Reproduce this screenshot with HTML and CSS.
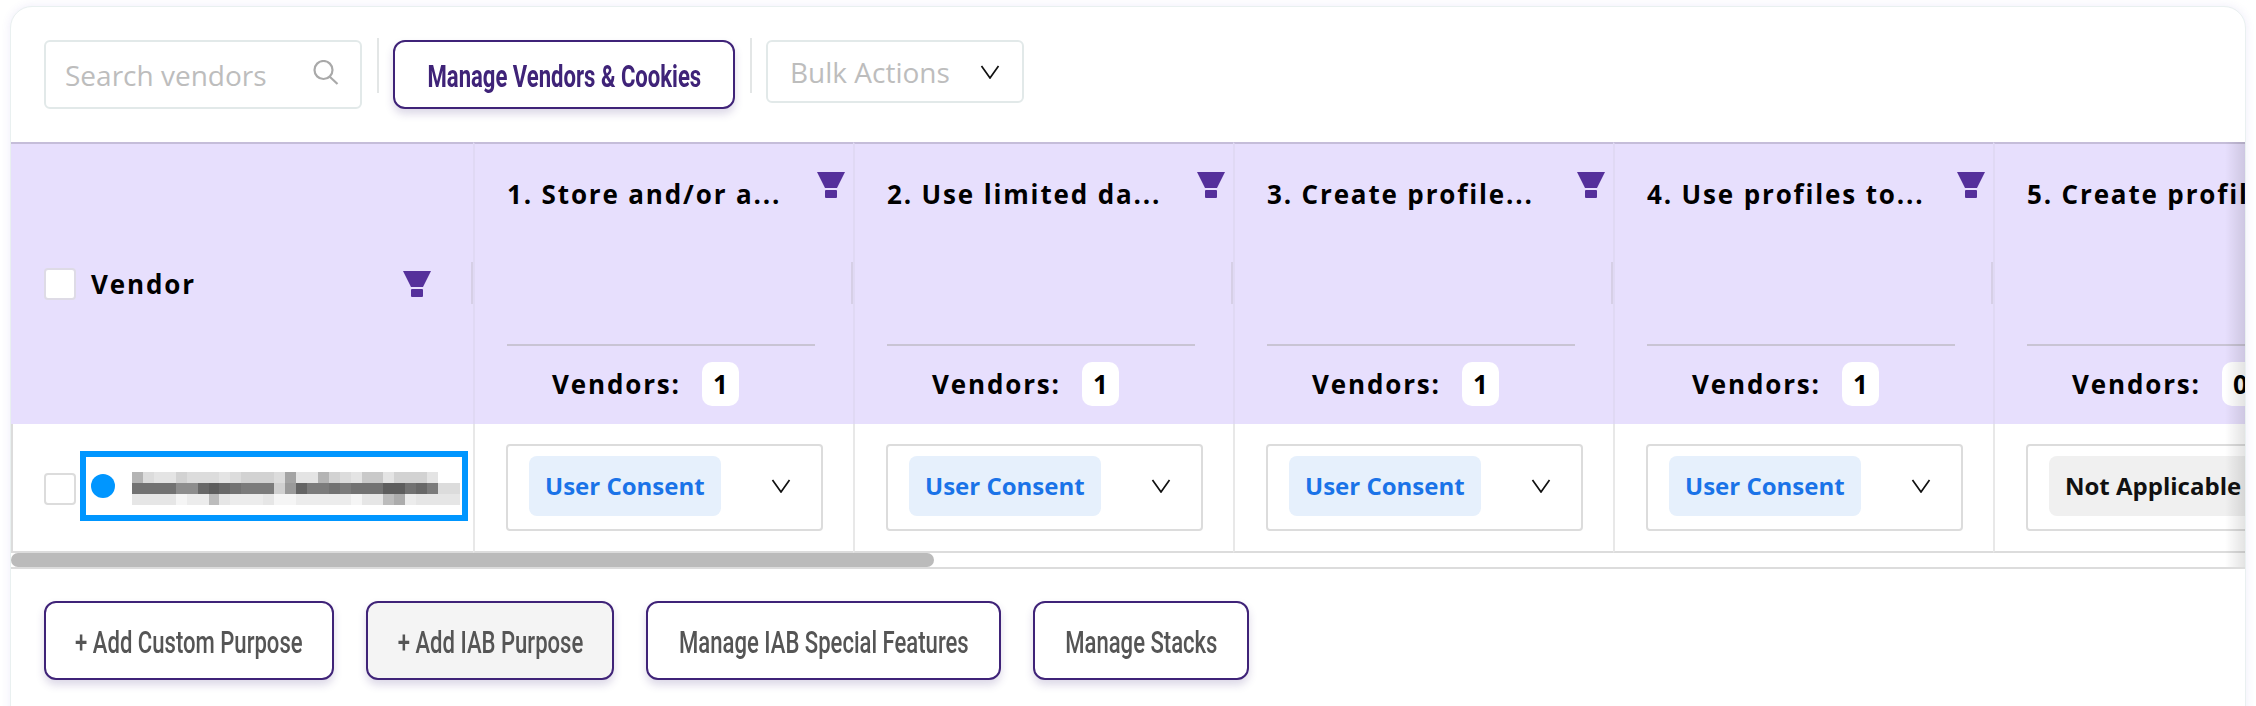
FILE: index.html
```html
<!DOCTYPE html>
<html lang="en">

<head>
  <meta charset="UTF-8" />
  <title>Vendors</title>
  <link rel="stylesheet" href="styles.css">
</head>

<body>
  <div class="card">
    <div class="toolbar">
      <div class="search-box">
        <span>Search vendors</span>
        <svg class="search-icon" width="26" height="26" viewBox="0 0 26 26" fill="none" stroke="#a9a9a9" stroke-width="2.2"><circle cx="10.5" cy="10" r="9"/><path d="M16.5 16.5 L24.5 24"/></svg>
      </div>
      <div class="divider"></div>
      <button class="btn btn-main"><span class="narrow">Manage Vendors &amp; Cookies</span></button>
      <div class="divider"></div>
      <div class="bulk-box">
        <span>Bulk Actions</span>
        <svg class="chevron" width="20" height="14" viewBox="0 0 20 14" fill="none" stroke="#111" stroke-width="1.7"><path d="M1.5 1 L10 13 L18.5 1"/></svg>
      </div>
    </div>

    <div class="table-wrap">
      <div class="table">
        <div class="th th-vendor">
          <span class="checkbox"></span>
          <span class="vendor-label">Vendor</span>
          <svg class="funnel funnel-vendor" width="28" height="26" viewBox="0 0 28 26"><path d="M0 0 H28 L20 16 H8 Z"/><rect x="8" y="18" width="12" height="8" rx="1"/></svg>
        </div>
        <div class="th">
          <div class="th-top">
            <span class="th-title">1. Store and/or a...</span>
            <svg class="funnel" width="28" height="26" viewBox="0 0 28 26"><path d="M0 0 H28 L20 16 H8 Z"/><rect x="8" y="18" width="12" height="8" rx="1"/></svg>
          </div>
          <div class="th-foot"><span>Vendors:</span><span class="count">1</span></div>
        </div>
        <div class="th">
          <div class="th-top">
            <span class="th-title">2. Use limited da...</span>
            <svg class="funnel" width="28" height="26" viewBox="0 0 28 26"><path d="M0 0 H28 L20 16 H8 Z"/><rect x="8" y="18" width="12" height="8" rx="1"/></svg>
          </div>
          <div class="th-foot"><span>Vendors:</span><span class="count">1</span></div>
        </div>
        <div class="th">
          <div class="th-top">
            <span class="th-title">3. Create profile...</span>
            <svg class="funnel" width="28" height="26" viewBox="0 0 28 26"><path d="M0 0 H28 L20 16 H8 Z"/><rect x="8" y="18" width="12" height="8" rx="1"/></svg>
          </div>
          <div class="th-foot"><span>Vendors:</span><span class="count">1</span></div>
        </div>
        <div class="th">
          <div class="th-top">
            <span class="th-title">4. Use profiles to...</span>
            <svg class="funnel" width="28" height="26" viewBox="0 0 28 26"><path d="M0 0 H28 L20 16 H8 Z"/><rect x="8" y="18" width="12" height="8" rx="1"/></svg>
          </div>
          <div class="th-foot"><span>Vendors:</span><span class="count">1</span></div>
        </div>
        <div class="th th-last">
          <div class="th-top">
            <span class="th-title">5. Create profiles...</span>
          </div>
          <div class="th-foot"><span>Vendors:</span><span class="count">0</span></div>
        </div>

        <div class="td td-vendor">
          <span class="checkbox checkbox-row"></span>
          <div class="vendor-focus">
            <span class="dot"></span>
            <!-- vendor name is pixelated in the source -->
            <svg class="pixels" width="328" height="33" viewBox="0 0 30 3" preserveAspectRatio="none" shape-rendering="crispEdges">
              <g>
                <path fill="#b4b4b4" d="M0 0h1v1h-1z M17 0h1v1h-1z"/>
                <path fill="#a4a4a4" d="M14 0h1v1h-1z"/>
                <path fill="#dcdcdc" d="M1 0h1v1h-1z M5 0h3v1h-3z M9 0h1v1h-1z M13 0h1v1h-1z M19 0h1v1h-1z"/>
                <path fill="#e4e4e4" d="M2 0h2v1h-2z M8 0h1v1h-1z M15 0h2v1h-2z M20 0h1v1h-1z M23 0h1v1h-1z M27 0h1v1h-1z"/>
                <path fill="#d2d2d2" d="M4 0h1v1h-1z M10 0h3v1h-3z M18 0h1v1h-1z M24 0h3v1h-3z"/>
                <path fill="#c9c9c9" d="M21 0h2v1h-2z"/>
                <path fill="#727272" d="M0 1h4v1h-4z M9 1h1v1h-1z M18 1h1v1h-1z M20 1h3v1h-3z M25 1h1v1h-1z"/>
                <path fill="#8d8d8d" d="M4 1h2v1h-2z"/>
                <path fill="#686868" d="M6 1h1v1h-1z M8 1h1v1h-1z M26 1h1v1h-1z"/>
                <path fill="#5d5d5d" d="M7 1h1v1h-1z M23 1h2v1h-2z"/>
                <path fill="#7b7b7b" d="M10 1h3v1h-3z M16 1h2v1h-2z M19 1h1v1h-1z M27 1h1v1h-1z"/>
                <path fill="#d0d0d0" d="M13 1h1v1h-1z"/>
                <path fill="#9a9a9a" d="M14 1h1v1h-1z"/>
                <path fill="#646464" d="M15 1h1v1h-1z"/>
                <path fill="#dcdcdc" d="M28 1h2v1h-2z"/>
                <path fill="#e6e6e6" d="M0 2h4v1h-4z M8 2h1v1h-1z M12 2h1v1h-1z M21 2h2v1h-2z M26 2h4v1h-4z"/>
                <path fill="#f5f5f5" d="M4 2h1v1h-1z M13 2h2v1h-2z M20 2h1v1h-1z"/>
                <path fill="#ececec" d="M5 2h2v1h-2z M9 2h3v1h-3z M15 2h5v1h-5z M25 2h1v1h-1z"/>
                <path fill="#bcbcbc" d="M7 2h1v1h-1z M23 2h1v1h-1z"/>
                <path fill="#acacac" d="M24 2h1v1h-1z"/>
              </g>
            </svg>
          </div>
        </div>
        <div class="td">
          <div class="select"><span class="chip chip-blue">User Consent</span><svg class="chevron" width="20" height="14" viewBox="0 0 20 14" fill="none" stroke="#111" stroke-width="1.7"><path d="M1.5 1 L10 13 L18.5 1"/></svg></div>
        </div>
        <div class="td">
          <div class="select"><span class="chip chip-blue">User Consent</span><svg class="chevron" width="20" height="14" viewBox="0 0 20 14" fill="none" stroke="#111" stroke-width="1.7"><path d="M1.5 1 L10 13 L18.5 1"/></svg></div>
        </div>
        <div class="td">
          <div class="select"><span class="chip chip-blue">User Consent</span><svg class="chevron" width="20" height="14" viewBox="0 0 20 14" fill="none" stroke="#111" stroke-width="1.7"><path d="M1.5 1 L10 13 L18.5 1"/></svg></div>
        </div>
        <div class="td">
          <div class="select"><span class="chip chip-blue">User Consent</span><svg class="chevron" width="20" height="14" viewBox="0 0 20 14" fill="none" stroke="#111" stroke-width="1.7"><path d="M1.5 1 L10 13 L18.5 1"/></svg></div>
        </div>
        <div class="td td-last">
          <div class="select"><span class="chip chip-grey">Not Applicable</span></div>
        </div>
      </div>
      <div class="scrollbar"><div class="scroll-thumb"></div></div>
      <div class="edge-shade"></div>
    </div>

    <div class="actions">
      <button class="btn btn-add-custom"><span class="narrow">+ Add Custom Purpose</span></button>
      <button class="btn btn-add-iab"><span class="narrow">+ Add IAB Purpose</span></button>
      <button class="btn btn-features"><span class="narrow">Manage IAB Special Features</span></button>
      <button class="btn btn-stacks"><span class="narrow">Manage Stacks</span></button>
    </div>
  </div>
</body>

</html>
```

FILE: styles.css
```css
* {
  box-sizing: border-box;
}

html,
body {
  margin: 0;
  height: 706px;
  overflow: hidden;
  background: #fff;
}

body {
  font-family: 'Open Sans', sans-serif;
  color: #000;
}

.card {
  margin: 6px 10px 0;
  height: 760px;
  background: #fff;
  border: 1px solid #e9f0f0;
  border-radius: 22px;
  box-shadow: 0 0 10px rgba(90, 70, 200, 0.1);
}

/* toolbar */
.toolbar {
  display: flex;
  align-items: flex-start;
  height: 135px;
  padding: 33px 0 0 33px;
}

.search-box {
  width: 318px;
  height: 69px;
  display: flex;
  align-items: center;
  justify-content: space-between;
  padding: 0 21px 0 19px;
  border: 2px solid #e2e9e9;
  border-radius: 6px;
  font-size: 28px;
  color: #bdbdbd;
  white-space: nowrap;
}

.search-icon {
  margin-top: -3px;
}

.divider {
  width: 2px;
  height: 55px;
  margin: -2px 14px 0 15px;
  background: #e3e6e6;
}

.btn {
  display: flex;
  align-items: center;
  justify-content: center;
  height: 79px;
  padding: 3px 0 0;
  background: #fff;
  border: 2px solid #3f2378;
  border-radius: 12px;
  box-shadow: 0 5px 8px rgba(60, 40, 120, 0.18);
  color: #555;
  font-family: Roboto, 'Liberation Sans', sans-serif;
  font-size: 32px;
  font-weight: 500;
}

.narrow {
  display: inline-block;
  flex-shrink: 0;
  transform: scaleX(0.69);
  white-space: nowrap;
}

.btn-main {
  width: 342px;
  height: 69px;
  color: #3f2378;
  font-weight: 700;
}

.bulk-box {
  width: 258px;
  height: 63px;
  display: flex;
  align-items: center;
  justify-content: space-between;
  padding: 0 22px 0 22px;
  border: 2px solid #e2e9e9;
  border-radius: 6px;
  font-size: 28px;
  color: #bdbdbd;
  white-space: nowrap;
}

/* table */
.table-wrap {
  position: relative;
  overflow: hidden;
  border-bottom: 2px solid #dcdcdc;
}

.table {
  display: grid;
  grid-template-columns: 462px repeat(5, 380px);
  grid-template-rows: 282px 129px;
  width: 2362px;
}

.th {
  position: relative;
  display: flex;
  flex-direction: column;
  padding: 33px 8px 18px 32px;
  background: #e7dffd;
  border-top: 2px solid #c5bdd9;
  border-left: 2px solid #e0d9f4;
}

/* short resize mark at the end of each header cell */
.th::after {
  content: "";
  position: absolute;
  top: 118px;
  right: 0;
  width: 2px;
  height: 42px;
  background: #d6cfe6;
}

.th-last::after {
  display: none;
}

.th-vendor {
  flex-direction: row;
  align-items: center;
  gap: 15px;
  padding: 0 0 0 33px;
  border-left: none;
}

.vendor-label,
.th-title,
.th-foot {
  font-size: 26px;
  font-weight: 700;
  letter-spacing: 1.85px;
  line-height: 34px;
  white-space: nowrap;
}

.funnel {
  flex-shrink: 0;
  fill: #55309b;
}

.funnel-vendor {
  margin-left: auto;
  margin-right: 42px;
}

.th-top {
  display: flex;
  justify-content: space-between;
  align-items: flex-start;
}

.th-top .funnel {
  margin-top: -5px;
}

.th-foot {
  display: flex;
  align-items: center;
  gap: 21px;
  width: 308px;
  margin-top: auto;
  padding: 16px 0 0 45px;
  border-top: 2px solid #c9c4d4;
}

.count {
  display: flex;
  align-items: center;
  justify-content: center;
  width: 37px;
  height: 44px;
  background: #fff;
  border-radius: 10px;
  letter-spacing: 0;
}

.checkbox {
  flex-shrink: 0;
  width: 32px;
  height: 32px;
  background: #fff;
  border: 2px solid #dedbe6;
  border-radius: 4px;
}

.td {
  display: flex;
  align-items: center;
  padding: 0 0 0 31px;
  border-left: 2px solid #e8e8e8;
  border-bottom: 2px solid #dcdcdc;
}

.td-vendor {
  gap: 4px;
  padding-left: 31px;
  border-left: 2px solid #dcdcdc;
}

.checkbox-row {
  margin-top: 3px;
  border-color: #dcdcdc;
}

.vendor-focus {
  display: flex;
  align-items: center;
  gap: 17px;
  width: 388px;
  height: 70px;
  margin-top: -4px;
  padding-left: 5px;
  border: 6px solid #0096ff;
}

.dot {
  flex-shrink: 0;
  width: 24px;
  height: 24px;
  border-radius: 50%;
  background: #0096ff;
}

.pixels {
  flex-shrink: 0;
  margin-top: 5px;
  filter: blur(0.6px);
}

.select {
  display: flex;
  align-items: center;
  justify-content: space-between;
  flex-shrink: 0;
  width: 317px;
  height: 87px;
  padding: 0 30px 3px 21px;
  border: 2px solid #dcdcdc;
  border-radius: 4px;
  overflow: hidden;
}

.chip {
  flex-shrink: 0;
  height: 60px;
  line-height: 60px;
  padding: 0 16px;
  border-radius: 8px;
  font-size: 24px;
  font-weight: 700;
  white-space: nowrap;
}

.chip-blue {
  background: #e6f0fc;
  color: #1a73e8;
}

.chip-grey {
  background: #f0f0f0;
  color: #111;
}

.scrollbar {
  height: 14px;
}

.scroll-thumb {
  width: 923px;
  height: 14px;
  background: #bbb;
  border-radius: 7px;
}

.edge-shade {
  position: absolute;
  top: 0;
  right: 0;
  bottom: 0;
  width: 20px;
  background: linear-gradient(to right, rgba(0, 0, 0, 0), rgba(0, 0, 0, 0.11));
  pointer-events: none;
}

/* bottom buttons */
.actions {
  display: flex;
  gap: 32px;
  padding: 32px 0 0 33px;
}

.btn-add-custom {
  width: 290px;
}

.btn-add-iab {
  width: 248px;
  background: #f4f4f4;
}

.btn-features {
  width: 355px;
}

.btn-stacks {
  width: 216px;
}
```
